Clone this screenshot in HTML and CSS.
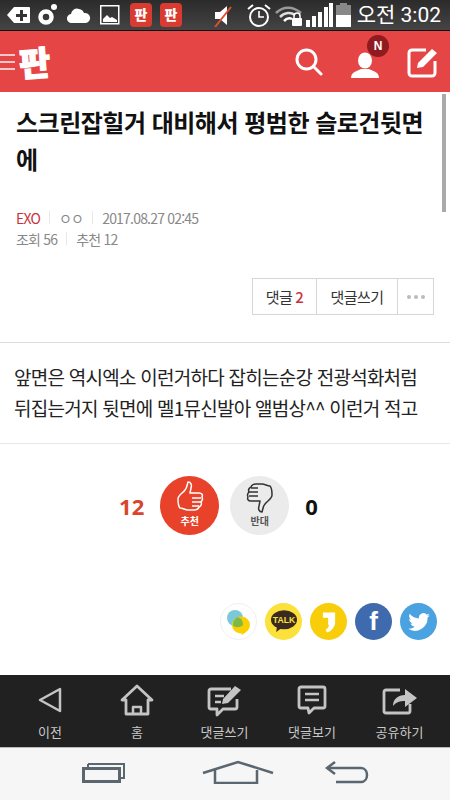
FILE: index.html
```html
<!DOCTYPE html>
<html lang="ko">
<head>
    <meta charset="UTF-8">
    <meta name="viewport" content="width=device-width, initial-scale=1.0">
    <title>판</title>
    <link rel="stylesheet" href="styles.css">
</head>
<body>
<div class="screen">
    <div class="status">
        <div class="status-left">
            <svg class="st-add" width="24" height="18" viewBox="0 0 24 18"><path d="M0 9 7 1h15a1 1 0 0 1 1 1v14a1 1 0 0 1-1 1H7z" fill="#fff"/><path d="M13 4h3v4h4v3h-4v4h-3v-4H9V8h4z" fill="#333"/></svg>
            <svg class="st-o" width="20" height="24" viewBox="0 0 20 24"><circle cx="8" cy="14" r="5.500" fill="none" stroke="#fff" stroke-width="4.500"/><circle cx="16" cy="4" r="3" fill="#fff"/></svg>
            <svg class="st-cloud" width="24" height="16" viewBox="0 0 24 16"><path d="M5 16a4.500 4.500 0 0 1-1-9 6 6 0 0 1 8-5 6 6 0 0 1 5 4 5 5 0 0 1 2 10z" fill="#fff"/></svg>
            <svg class="st-pic" width="20" height="20" viewBox="0 0 20 20"><rect x=".75" y=".75" width="18" height="18" fill="none" stroke="#fff" stroke-width="1.500"/><path d="M3 17v-3l4-4 3 3 2-1 5 3v2z" fill="#fff"/></svg>
            <span class="app-icon">판</span>
            <span class="app-icon">판</span>
        </div>
        <div class="status-right">
            <svg width="24" height="24" viewBox="0 0 24 24"><path d="M2 9h5l7-6v19l-7-6H2z" fill="#fff"/><path d="M2 24 18 4" stroke="#e0502f" stroke-width="2"/></svg>
            <svg width="26" height="26" viewBox="0 0 26 26" fill="none" stroke="#fff"><circle cx="13" cy="15" r="9" stroke-width="2"/><path d="M13 9v6h5" stroke-width="1.600"/><path d="M2 7l5-4M24 7l-5-4" stroke-width="2"/></svg>
            <svg width="28" height="22" viewBox="0 0 28 22" fill="none"><path d="M1 9c7-7 17-7 25 0" stroke="#999" stroke-width="2.500"/><path d="M5 13c5-5 11-5 15-2" stroke="#ddd" stroke-width="2.500"/><path d="M9 17c3-3 6-3 8-2" stroke="#fff" stroke-width="2.500"/><rect x="17" y="14" width="10" height="8" rx="1" fill="#fff"/><path d="M19 14v-2a3 3 0 0 1 6 0v2" stroke="#fff" stroke-width="1.500"/></svg>
            <svg width="27" height="24" viewBox="0 0 27 24" fill="#fff"><rect x="0" y="17" width="4" height="7"/><rect x="6" y="13" width="4" height="11"/><rect x="12" y="9" width="4" height="15"/><rect x="18" y="4" width="4" height="20"/><rect x="23" y="0" width="4" height="24"/></svg>
            <svg class="st-batt" width="15" height="24" viewBox="0 0 15 24"><rect x="4" y="0" width="7" height="3" fill="#888"/><rect x="0" y="2" width="15" height="10" fill="#888"/><rect x="0" y="12" width="15" height="12" fill="#fff"/></svg>
            <span class="clock">오전 3:02</span>
        </div>
    </div>

    <header class="topbar">
        <div class="brand">
            <span class="burger"><i></i><i></i><i></i></span>
            <span class="logo">판</span>
        </div>
        <div class="top-icons">
            <svg width="28" height="28" viewBox="0 0 28 28" fill="none" stroke="#fff" stroke-width="3"><circle cx="11.500" cy="11.500" r="9.500"/><path d="M18.500 18.500 26 26" stroke-linecap="round"/></svg>
            <div class="user">
                <svg width="28" height="26" viewBox="0 0 28 26" fill="#fff"><ellipse cx="14" cy="8.500" rx="7" ry="8"/><path d="M0 26c0-6 6-7 10-9h8c4 2 10 3 10 9z"/></svg>
                <span class="badge">N</span>
            </div>
            <svg width="32" height="32" viewBox="0 0 32 32" fill="none"><path d="M19 4H5a3 3 0 0 0-3 3v20a3 3 0 0 0 3 3h20a3 3 0 0 0 3-3V15" stroke="#fff" stroke-width="3"/><path d="M11 17 25 3l5 4-14 14-6 1z" fill="#fff"/></svg>
        </div>
    </header>

    <main class="article">
        <h1 class="title">스크린잡힐거 대비해서 평범한 슬로건뒷면에</h1>
        <div class="meta">
            <div class="meta-row"><span class="cat">EXO</span><span class="sep"></span><span>ㅇㅇ</span><span class="sep"></span><span>2017.08.27 02:45</span></div>
            <div class="meta-row"><span>조회 56</span><span class="sep"></span><span>추천 12</span></div>
        </div>
        <div class="actions">
            <div class="btn-group">
                <span class="btn btn-count">댓글<b>2</b></span>
                <span class="btn btn-write">댓글쓰기</span>
                <span class="btn btn-more"><i></i><i></i><i></i></span>
            </div>
        </div>
        <div class="body-text">앞면은 역시엑소 이런거하다 잡히는순강 전광석화처럼 뒤집는거지 뒷면에 멜1뮤신발아 앨범상^^ 이런거 적고</div>
        <div class="vote">
            <span class="count count-up">12</span>
            <div class="circle circle-up">
                <svg width="28" height="32" viewBox="0 0 28 32" fill="none" stroke="#fff" stroke-width="1.500" stroke-linejoin="round"><path d="M2 18c0-4 5-6 7-9 2-2 2-5 3-8 3 0 4 3 3 6l-1 5h9c3 0 4 2 3 4 1 2 1 3-1 5 1 2 0 4-2 5-1 3-3 3-5 3h-6c-3 0-5-2-8-2-2-2-2-5-2-9z"/><path d="M16 17h9M16 21h9M16 25h7"/></svg>
                <span>추천</span>
            </div>
            <div class="circle circle-down">
                <svg width="28" height="32" viewBox="0 0 28 32" fill="none" stroke="#333" stroke-width="1.500" stroke-linejoin="round"><path d="M26 14c0 4-5 6-7 9-2 2-2 5-3 8-3 0-4-3-3-6l1-5H5c-3 0-4-2-3-4-1-2-1-3 1-5-1-2 0-4 2-5 1-3 3-3 5-3h6c3 0 5 2 8 2 2 2 2 5 2 9z"/><path d="M12 15H3M12 11H3M12 7H5"/></svg>
                <span>반대</span>
            </div>
            <span class="count count-down">0</span>
        </div>
        <div class="share">
            <span class="sns sns-band">
                <svg width="28" height="28" viewBox="0 0 28 28"><circle cx="10" cy="10" r="8" fill="#7cc8d8"/><ellipse cx="16" cy="17" rx="9" ry="8.500" fill="#fbd000"/><path d="M17 27l4-3-5-1z" fill="#fbd000"/><path d="M12.500 9a8 8 0 0 1 5.500 8.200A8.500 8.500 0 0 1 8 17.700 9 9 0 0 1 12.500 9z" fill="#7fb84a"/></svg>
            </span>
            <span class="sns sns-talk">
                <svg width="26" height="23" viewBox="0 0 30 26"><ellipse cx="15" cy="11" rx="15" ry="11" fill="#3a2a20"/><path d="M7 18l-1 7 7-5z" fill="#3a2a20"/><text x="15" y="14.500" class="talk-text">TALK</text></svg>
            </span>
            <span class="sns sns-story">
                <svg width="14" height="24" viewBox="0 0 16 26"><path d="M1 2h14v12c0 4-4 9-9 11l-2-3c2-1 4-4 4-6H7V8H1z" fill="#fff"/></svg>
            </span>
            <span class="sns sns-fb">f</span>
            <span class="sns sns-tw">
                <svg width="22" height="18" viewBox="0 0 24 20"><path d="M24 2.400c-.9.400-1.800.7-2.800.8 1-.6 1.800-1.500 2.200-2.700-1 .6-2 1-3.100 1.200A4.900 4.900 0 0 0 12 6.200C8 6 4.400 4.100 1.700.9c-1.300 2.300-.6 5.100 1.500 6.500-.8 0-1.500-.2-2.200-.6 0 2.400 1.700 4.400 3.900 4.900-.7.200-1.500.2-2.200.1.600 2 2.400 3.400 4.600 3.400A9.900 9.900 0 0 1 0 17.500 14 14 0 0 0 21.500 5c1-.7 1.800-1.600 2.500-2.600z" fill="#fff"/></svg>
            </span>
        </div>
    </main>
    <div class="scrollbar"></div>

    <nav class="toolbar">
        <div class="tool">
            <svg width="26" height="28" viewBox="0 0 26 28" fill="none" stroke="#c4c4c4" stroke-width="2.500" stroke-linejoin="round"><path d="M23 3v22L3 14z"/></svg>
            <span>이전</span>
        </div>
        <div class="tool">
            <svg width="34" height="32" viewBox="0 0 34 32" fill="none" stroke="#c4c4c4" stroke-width="2.800" stroke-linejoin="round"><path d="M2 16 17 2l15 14h-4v14H6V16z"/><path d="M13 30v-7h8v7" stroke-width="2.500"/></svg>
            <span>홈</span>
        </div>
        <div class="tool">
            <svg width="36" height="34" viewBox="0 0 36 34" fill="none"><path d="M24 6H4a2 2 0 0 0-2 2v16a2 2 0 0 0 2 2h6v6l6-6h12a2 2 0 0 0 2-2v-8" stroke="#c4c4c4" stroke-width="2.800" stroke-linejoin="round"/><path d="M8 13h9M8 19h6" stroke="#c4c4c4" stroke-width="2.500"/><path d="M16 16 28 3l6 4-13 13-6 1z" fill="#c4c4c4"/></svg>
            <span>댓글쓰기</span>
        </div>
        <div class="tool">
            <svg width="30" height="30" viewBox="0 0 30 30" fill="none" stroke="#c4c4c4" stroke-width="2.800" stroke-linejoin="round"><path d="M4 2h22a2 2 0 0 1 2 2v17a2 2 0 0 1-2 2H17l-5 5-1-5H4a2 2 0 0 1-2-2V4a2 2 0 0 1 2-2z"/><path d="M8 9h14M8 15h14" stroke-width="2.500"/></svg>
            <span>댓글보기</span>
        </div>
        <div class="tool">
            <svg width="36" height="30" viewBox="0 0 36 30" fill="none"><path d="M18 5H4a2 2 0 0 0-2 2v19a2 2 0 0 0 2 2h22a2 2 0 0 0 2-2v-7" stroke="#c4c4c4" stroke-width="2.800"/><path d="M11 21c0-7 5-11 12-11V4l12 9-12 9v-6c-5 0-9 1-12 5z" fill="#c4c4c4"/></svg>
            <span>공유하기</span>
        </div>
    </nav>

    <div class="softkeys">
        <svg width="44" height="22" viewBox="0 0 44 22" fill="none" stroke="#5a6670"><path d="M6 3h36v14h-4" stroke-width="2"/><path d="M6 3v3" stroke-width="2"/><rect x="1.500" y="7.500" width="36" height="13" stroke-width="3"/></svg>
        <svg class="key-home" width="74" height="24" viewBox="0 0 74 24" fill="none" stroke="#5a6670" stroke-width="2.500"><path d="M2 13 37 2l35 11"/><path d="M14 10v13h42V10"/></svg>
        <svg class="key-back" width="44" height="24" viewBox="0 0 44 24" fill="none" stroke="#5a6670" stroke-width="2.500"><path d="M10 2 2 8l8 6"/><path d="M2 8h34c8 0 8 14 0 14H11"/></svg>
    </div>
</div>
</body>
</html>
```

FILE: styles.css
```css
* {
    box-sizing: border-box;
}
body {
    margin: 0;
    font-family: "Noto Sans CJK KR", "Noto Sans", sans-serif;
    background: #fff;
}
.screen {
    position: relative;
    width: 450px;
    height: 800px;
    display: flex;
    flex-direction: column;
    overflow: hidden;
}

/* status bar */
.status {
    height: 31px;
    background: linear-gradient(#2b2b2b, #444);
    border-bottom: 1px solid #111;
    display: flex;
    justify-content: space-between;
    align-items: center;
    padding: 0 9px 0 7px;
}
.status-left,
.status-right {
    display: flex;
    align-items: center;
}
.status-left svg {
    flex: none;
}
.st-o {
    margin: 0 0 0 7px;
}
.st-cloud {
    margin-left: 9px;
}
.st-pic {
    margin-left: 9px;
}
.app-icon {
    width: 22px;
    height: 24px;
    margin-left: 8px;
    background: #d93b30;
    border-radius: 4px;
    color: #fff;
    font-size: 14px;
    font-weight: 900;
    line-height: 23px;
    text-align: center;
}
.status-left .app-icon:first-of-type {
    margin-left: 10px;
}
.status-right {
    gap: 3px;
}
.status-right svg:first-child {
    margin-right: 6px;
}
.clock {
    margin-left: 3px;
    color: #fff;
    font-family: "Roboto", "Noto Sans CJK KR", sans-serif;
    font-size: 21px;
    line-height: 26px;
    white-space: nowrap;
}

/* red header */
.topbar {
    height: 61px;
    background: #e64545;
    display: flex;
    justify-content: space-between;
    align-items: center;
    padding: 0 11px 0 0;
}
.brand {
    display: flex;
    align-items: center;
}
.burger {
    display: flex;
    flex-direction: column;
    gap: 5px;
    width: 15px;
}
.burger i {
    display: block;
    height: 2px;
    background: #f8c8c8;
}
.logo {
    color: #fff;
    font-size: 34px;
    font-weight: 900;
    line-height: 44px;
    margin: 0 0 0 4px;
    -webkit-text-stroke: 1px #fff;
    transform: rotate(-4deg);
}
.top-icons {
    display: flex;
    align-items: center;
    gap: 28px;
}
.user {
    position: relative;
    margin-top: 6px;
    height: 26px;
}
.badge {
    position: absolute;
    left: 16px;
    top: -17px;
    width: 22px;
    height: 22px;
    border-radius: 50%;
    background: #8f1a1f;
    color: #fff;
    font-family: "Liberation Sans", sans-serif;
    font-size: 12px;
    font-weight: 700;
    line-height: 22px;
    text-align: center;
}

/* article */
.article {
    flex: 1;
    min-height: 0;
}
.title {
    margin: 0;
    padding: 11px 20px 0 16px;
    color: #111;
    font-size: 24px;
    font-weight: 700;
    line-height: 37px;
    letter-spacing: -0.5px;
    height: 115px;
}
.meta {
    padding: 0 16px;
    color: #888;
    font-size: 14px;
    letter-spacing: -0.8px;
}
.meta-row {
    display: flex;
    align-items: center;
    height: 21px;
}
.cat {
    color: #c8333f;
}
.sep {
    width: 1px;
    height: 13px;
    background: #e8e8e8;
    margin: 0 9px;
}
.actions {
    display: flex;
    justify-content: flex-end;
    padding: 29px 16px 27px 0;
}
.btn-group {
    display: flex;
    height: 37px;
    border: 1px solid #d6d6d6;
}
.btn {
    display: flex;
    align-items: center;
    justify-content: center;
    gap: 3px;
    color: #333;
    font-size: 15px;
    letter-spacing: -0.5px;
    border-left: 1px solid #d6d6d6;
    white-space: pre;
}
.btn:first-child {
    border-left: 0;
}
.btn b {
    color: #c8333f;
    font-weight: 500;
}
.btn-count {
    width: 63px;
}
.btn-write {
    width: 81px;
}
.btn-more {
    width: 36px;
    gap: 3px;
}
.btn-more i {
    width: 4px;
    height: 4px;
    border-radius: 50%;
    background: #bbb;
}
.body-text {
    border-top: 1px solid #ddd;
    border-bottom: 1px solid #e8e8e8;
    padding: 18px 14px 17px;
    height: 102px;
    color: #222;
    font-size: 19px;
    line-height: 31px;
    letter-spacing: -0.75px;
    word-break: keep-all;
}
.vote {
    display: flex;
    align-items: center;
    justify-content: center;
    gap: 11px;
    margin-top: 32px;
    padding-right: 13px;
}
.count {
    font-family: "Open Sans", "Noto Sans", sans-serif;
    font-size: 22px;
    font-weight: 700;
}
.count-up {
    color: #d8452c;
    margin-right: 5px;
}
.count-down {
    color: #111;
    margin-left: 5px;
}
.circle {
    width: 59px;
    height: 59px;
    border-radius: 50%;
    display: flex;
    flex-direction: column;
    align-items: center;
    padding-top: 5px;
    font-size: 10px;
    font-weight: 700;
    line-height: 13px;
}
.circle span {
    margin-top: 1px;
}
.circle-up {
    background: #e8432a;
    color: #fff;
}
.circle-down {
    background: #ebebeb;
    color: #555;
}
.share {
    display: flex;
    justify-content: flex-end;
    gap: 8px;
    margin-top: 68px;
    padding-right: 13px;
}
.sns {
    width: 37px;
    height: 37px;
    border-radius: 50%;
    display: flex;
    align-items: center;
    justify-content: center;
}
.sns-band {
    border: 1px solid #f0f0f0;
}
.sns-talk {
    background: #fbe13a;
}
.talk-text {
    fill: #fbe13a;
    font-family: "Liberation Sans", sans-serif;
    font-size: 10px;
    font-weight: 700;
    text-anchor: middle;
}
.sns-story {
    background: #f8cd0a;
}
.sns-fb {
    background: #3f6aae;
    color: #fff;
    font-family: "Liberation Sans", sans-serif;
    font-size: 26px;
    font-weight: 700;
}
.sns-tw {
    background: #4aa3e0;
}
.scrollbar {
    position: absolute;
    right: 4px;
    top: 94px;
    width: 4px;
    height: 118px;
    background: #aaa;
}

/* app toolbar and phone keys */
.toolbar {
    height: 73px;
    background: #212121;
    border-bottom: 1px solid #bbb;
    display: grid;
    grid-template-columns: 100px 74px 101px 74px 101px;
    padding-top: 8px;
}
.tool {
    display: flex;
    flex-direction: column;
    align-items: center;
    color: #c8c8c8;
    font-size: 13px;
    line-height: 18px;
}
.tool svg {
    height: 34px;
    flex: none;
}
.tool span {
    margin-top: 6px;
}
.softkeys {
    height: 52px;
    background: #f6f6f6;
    display: flex;
    align-items: center;
    padding: 0 0 4px 82px;
}
.key-home {
    margin-left: 75px;
}
.key-back {
    margin-left: 50px;
}
```
